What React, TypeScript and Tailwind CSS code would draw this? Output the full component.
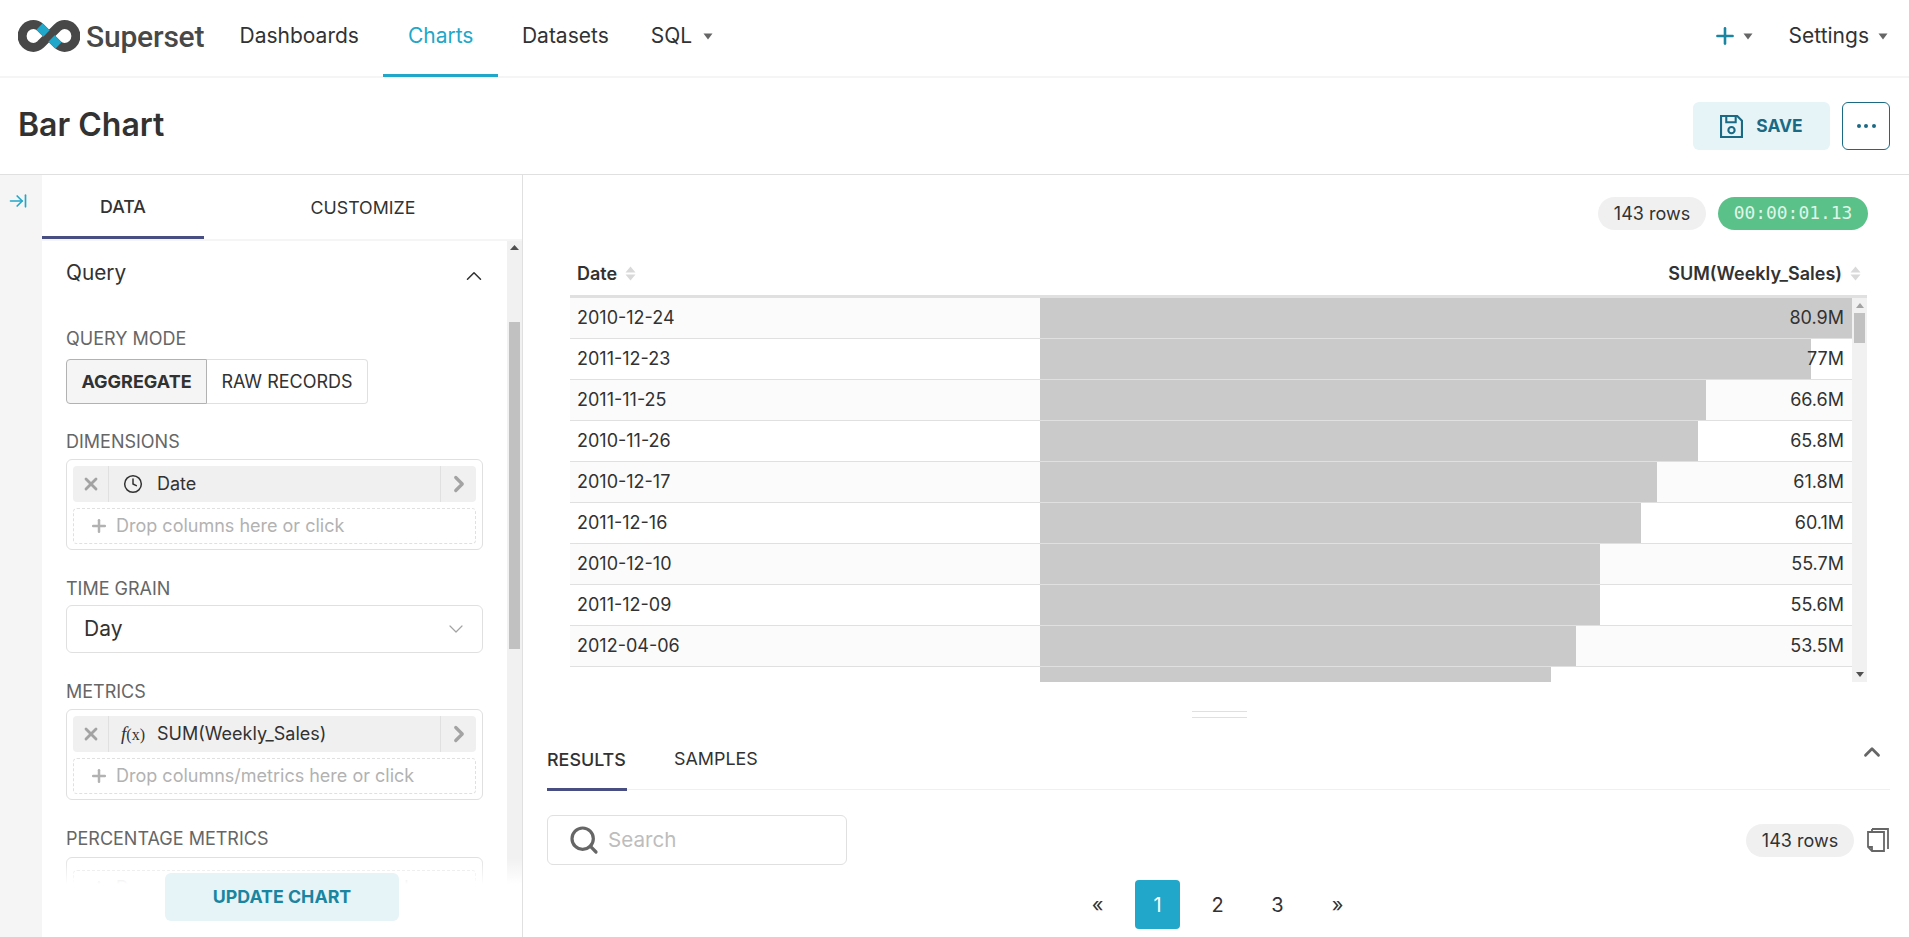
import React from 'react';
import { ArrowRightToLine, ChevronDown, ChevronRight, ChevronUp, Clock, Plus, Search, X } from 'lucide-react';

const rows = [
  { date: '2010-12-24', value: '80.9M', bar: 812 },
  { date: '2011-12-23', value: '77M', bar: 771 },
  { date: '2011-11-25', value: '66.6M', bar: 666 },
  { date: '2010-11-26', value: '65.8M', bar: 658 },
  { date: '2010-12-17', value: '61.8M', bar: 617 },
  { date: '2011-12-16', value: '60.1M', bar: 601 },
  { date: '2010-12-10', value: '55.7M', bar: 560 },
  { date: '2011-12-09', value: '55.6M', bar: 560 },
  { date: '2012-04-06', value: '53.5M', bar: 536 },
  { date: '', value: '', bar: 511 },
];

const Caret = () => (
  <svg width="10" height="7" viewBox="0 0 10 7" className="shrink-0">
    <path d="M0.5 0.5h9L5 6.5z" fill="#666666" />
  </svg>
);

const Logo = () => (
  <svg width="62" height="32" viewBox="0 0 62 32" className="shrink-0">
    <path
      d="M31 16L39.5 24.5C41.5 26.3 44 27.4 46.5 27.4A11.4 11.4 0 0 0 46.5 4.6C44 4.6 41.5 5.7 39.5 7.5L22.5 24.5C20.5 26.3 18 27.4 15.5 27.4A11.4 11.4 0 0 1 15.5 4.6C18 4.6 20.5 5.7 22.5 7.5L31 16"
      fill="none"
      stroke="#484848"
      strokeWidth="9"
    />
    <path d="M21.5 6.5L28.5 13.5M33.5 18.5L40.5 25.5" fill="none" stroke="#20a7c9" strokeWidth="9" />
  </svg>
);

const SortIcon = () => (
  <svg width="11" height="15" viewBox="0 0 11 15" className="shrink-0">
    <path d="M5.5 0.5L10.5 6.5H0.5zM5.5 14.5L0.5 8.5H10.5z" fill="#d9d9d9" />
  </svg>
);

const FieldLabel = ({ className, children }: { className: string; children: React.ReactNode }) => (
  <div className={`h-5 text-[18px] leading-[22px] text-[#666666] ${className}`}>{children}</div>
);

const DropZone = ({ text }: { text: string }) => (
  <div className="mt-[6px] h-9 flex items-center rounded border border-dashed border-[#e0e0e0] pl-[15px] text-[18px] text-[#b2b2b2] pb-[1px]">
    <Plus className="w-[20px] h-[20px] mr-[7px]" strokeWidth={3} color="#b2b2b2" />
    {text}
  </div>
);

const Pill = ({ icon, label }: { icon: React.ReactNode; label: string }) => (
  <div className="h-9 flex items-center rounded bg-[#f0f0f0] text-[18px] text-[#323232]">
    <div className="w-[36px] h-full flex items-center justify-center border-r border-[#e0e0e0]">
      <X className="w-[20px] h-[20px]" strokeWidth={3.4} color="#a3a3a3" />
    </div>
    <div className="w-[48px] flex justify-center">{icon}</div>
    <div className="flex-1 pb-[2px]">{label}</div>
    <div className="w-[36px] h-full flex items-center justify-center border-l border-[#e0e0e0]">
      <ChevronRight className="w-[26px] h-[26px]" strokeWidth={3} color="#a3a3a3" />
    </div>
  </div>
);

export default function App() {
  return (
    <div className="h-screen w-full overflow-hidden bg-white flex flex-col font-['Inter',sans-serif] text-[#323232]">
      {/* top nav */}
      <nav className="h-[78px] shrink-0 flex items-stretch border-b-2 border-[#f5f5f5] text-[21px]">
        <div className="flex items-center pl-[18px] gap-[6px] w-[215px] pb-[4px]">
          <Logo />
          <span className="font-['Roboto',sans-serif] font-medium text-[30px] text-[#484848] tracking-[-0.2px]">Superset</span>
        </div>
        <div className="px-[24.5px] flex items-center pb-[4px]">Dashboards</div>
        <div className="px-[24.5px] flex items-center pb-[3px] text-[#20a7c9] border-b-[3px] border-[#20a7c9] -mb-[1px]">Charts</div>
        <div className="px-[24px] flex items-center pb-[4px]">Datasets</div>
        <div className="ml-[18px] flex items-center gap-[11px] pb-[4px]">
          SQL <Caret />
        </div>
        <div className="ml-auto flex items-center pr-[21px] pb-[4px]">
          <Plus className="w-[26px] h-[26px] mr-[5px]" strokeWidth={2.4} color="#1985a0" />
          <Caret />
          <span className="ml-[36px] mr-[9px]">Settings</span>
          <Caret />
        </div>
      </nav>

      {/* title row */}
      <header className="h-[97px] shrink-0 flex items-center justify-between border-b border-[#e0e0e0] pl-[18px] pr-[19px]">
        <h1 className="text-[32px] font-semibold text-[#323232] -mt-[2px]">Bar Chart</h1>
        <div className="flex items-center gap-3">
          <button className="w-[137px] h-[48px] rounded-md bg-[#e6f4f8] flex items-center justify-center gap-[13px] text-[17.4px] font-bold text-[#1a6a85]">
            <svg width="23" height="23" viewBox="0 0 22 22" fill="none" stroke="#1a6a85" strokeWidth="2">
              <path d="M1 1H16.5L21 5.5V21H1zM6 1V7H15V1M11 17.5a3 3 0 1 0 0-6a3 3 0 0 0 0 6z" />
            </svg>
            SAVE
          </button>
          <button className="w-[48px] h-[48px] rounded-md border border-[#1a6a85] flex items-center justify-center gap-[3.5px]">
            <span className="w-1 h-1 rounded-full bg-[#1a6a85]" />
            <span className="w-1 h-1 rounded-full bg-[#1a6a85]" />
            <span className="w-1 h-1 rounded-full bg-[#1a6a85]" />
          </button>
        </div>
      </header>

      <div className="flex-1 min-h-0 flex">
        {/* collapsed rail */}
        <div className="w-[42px] shrink-0 bg-[#f5f5f5] pt-[16px] pl-[8px]">
          <ArrowRightToLine className="w-[20px] h-[20px]" strokeWidth={2} color="#20a7c9" />
        </div>

        {/* control panel */}
        <aside className="w-[481px] shrink-0 border-r border-[#e0e0e0] relative flex flex-col overflow-hidden">
          <div className="h-[64px] shrink-0 flex text-[17.8px]">
            <div className="w-[162px] flex items-center justify-center border-b-[3px] border-[#484e82] pt-[3px] font-medium">DATA</div>
            <div className="flex-1 flex items-center justify-center pt-[3px]">CUSTOMIZE</div>
          </div>
          <div className="flex-1 min-h-0 flex border-t-2 border-[#f5f5f5]">
            <div className="flex-1 px-6 pt-[20px] overflow-hidden">
              <div className="h-6 flex items-center justify-between text-[20.8px] leading-6">
                Query
                <ChevronUp className="w-[26px] h-[26px] -mr-[4px] mt-[5px]" strokeWidth={1.4} color="#323232" />
              </div>
              <FieldLabel className="mt-[43px]">QUERY MODE</FieldLabel>
              <div className="mt-[11px] flex w-[302px] h-[45px] text-[18px]">
                <div className="w-[141px] flex items-center justify-center rounded-l border border-[#b2b2b2] bg-[#f5f5f5] font-bold">AGGREGATE</div>
                <div className="flex-1 flex items-center justify-center rounded-r border border-l-0 border-[#e0e0e0]">RAW RECORDS</div>
              </div>
              <FieldLabel className="mt-[27px]">DIMENSIONS</FieldLabel>
              <div className="mt-2 h-[91px] rounded-md border border-[#e0e0e0] p-[6px]">
                <Pill icon={<Clock className="w-[20px] h-[20px]" strokeWidth={1.8} color="#323232" />} label="Date" />
                <DropZone text="Drop columns here or click" />
              </div>
              <FieldLabel className="mt-[28px]">TIME GRAIN</FieldLabel>
              <div className="mt-[7px] h-[48px] rounded-md border border-[#e0e0e0] flex items-center justify-between pl-[17px] pr-[14px] text-[21px]">
                Day
                <ChevronDown className="w-[24px] h-[24px]" strokeWidth={1.2} color="#a3a3a3" />
              </div>
              <FieldLabel className="mt-[28px]">METRICS</FieldLabel>
              <div className="mt-2 h-[91px] rounded-md border border-[#e0e0e0] p-[6px]">
                <Pill
                  icon={
                    <span className="font-['Liberation_Serif',serif] text-[16px] text-[#323232] whitespace-nowrap">
                      <i className="text-[19px]">f</i>(x)
                    </span>
                  }
                  label="SUM(Weekly_Sales)"
                />
                <DropZone text="Drop columns/metrics here or click" />
              </div>
              <FieldLabel className="mt-[28px]">PERCENTAGE METRICS</FieldLabel>
              <div className="mt-[9px] h-[91px] rounded-md border border-[#e0e0e0] p-[6px]">
                <DropZone text="Drop columns/metrics here or click" />
              </div>
            </div>
            {/* scrollbar */}
            <div className="w-[15px] shrink-0 bg-[#f1f1f1] flex flex-col items-center pt-[4px]">
              <svg width="9" height="5" viewBox="0 0 9 5">
                <path d="M4.5 0L9 5H0z" fill="#505050" />
              </svg>
              <div className="mt-[72px] w-[11px] h-[327px] bg-[#c1c1c1]" />
            </div>
          </div>
          {/* fade behind the update button */}
          <div className="absolute inset-x-0 bottom-0 h-[79px] bg-linear-to-b from-transparent to-white to-[33%] pointer-events-none" />
          <button className="absolute left-[123px] bottom-[16px] w-[234px] h-[48px] rounded-md bg-[#e6f4f8] text-[17.8px] font-bold text-[#1985a0]">
            UPDATE CHART
          </button>
        </aside>

        {/* chart + results */}
        <main className="flex-1 min-w-0 flex flex-col">
          <div className="mt-[22px] h-[33px] flex justify-end gap-3 pr-[41px]">
            <span className="w-[108px] rounded-full bg-[#f0f0f0] flex items-center justify-center text-[18px] text-[#323232]">143 rows</span>
            <span className="w-[150px] rounded-full bg-[#5ac189] flex items-center justify-center font-['DejaVu_Sans_Mono',monospace] text-[17.9px] text-[#dff5e8]">00:00:01.13</span>
          </div>

          <div className="ml-[47px] mr-[42px] mt-[24px]">
            <div className="h-[44px] flex items-center justify-between border-b-[3px] border-[#e0e0e0] pl-[7px] pr-[6px] pb-[2px] text-[18px] font-semibold">
              <span className="flex items-center gap-[8px]">Date <SortIcon /></span>
              <span className="flex items-center gap-[8px]">SUM(Weekly_Sales) <SortIcon /></span>
            </div>
            <div className="h-[384px] flex overflow-hidden">
              <div className="flex-1 min-w-0">
                {rows.map((row, i) => (
                  <div key={i} className={`h-[41px] flex border-b border-[#e0e0e0] text-[18px] ${i % 2 === 0 ? 'bg-[#fbfbfb]' : 'bg-white'}`}>
                    <div className="w-[470px] pl-[7px] pb-[1px] flex items-center">{row.date}</div>
                    <div className="flex-1 relative flex items-center justify-end pr-[8px] pb-[1px]">
                      <div className="absolute left-0 inset-y-0 bg-[#cacaca]" style={{ width: row.bar }} />
                      <span className="relative">{row.value}</span>
                    </div>
                  </div>
                ))}
              </div>
              <div className="w-[15px] shrink-0 bg-[#f1f1f1] flex flex-col items-center pt-[5px]">
                <svg width="8" height="5" viewBox="0 0 8 5">
                  <path d="M4 0L8 5H0z" fill="#a3a3a3" />
                </svg>
                <div className="mt-[5px] w-[11px] h-[30px] bg-[#c1c1c1]" />
                <svg width="8" height="5" viewBox="0 0 8 5" className="mt-auto mb-[5px]">
                  <path d="M4 5L8 0H0z" fill="#505050" />
                </svg>
              </div>
            </div>
          </div>

          {/* drag handle */}
          <div className="mt-[29px] self-center ml-[7px] w-[55px] h-[7px] border-y border-[#e0e0e0]" />

          <div className="mx-6 mr-[19px] mt-[20px] h-[52px] flex items-start justify-between border-b border-[#f0f0f0] text-[17.9px] relative">
            <div className="flex gap-[47px]">
              <div className="h-[53px] flex items-center w-[80px] border-b-[3px] border-[#484e82] pb-[6px] font-medium">RESULTS</div>
              <div className="h-[52px] flex items-center pb-[9px]">SAMPLES</div>
            </div>
            <ChevronUp className="w-[26px] h-[26px] mt-[1px] mr-[5px]" strokeWidth={2.6} color="#666666" />
          </div>

          <div className="mx-6 mr-[19px] mt-[25px] flex items-center justify-between">
            <div className="w-[300px] h-[50px] rounded-md border border-[#e0e0e0] flex items-center pl-[20px] text-[20.6px] text-[#bdbdbd]">
              <Search className="w-[32px] h-[32px] mr-[8px]" strokeWidth={2.4} color="#666666" />
              Search
            </div>
            <div className="flex items-center">
              <span className="w-[108px] h-[33px] rounded-full bg-[#f0f0f0] flex items-center justify-center text-[18px] ml-[1px]">143 rows</span>
              <svg width="22" height="25" viewBox="0 0 22 25" fill="none" stroke="#666666" strokeWidth="1.8" className="ml-[13px] mr-[1px]">
                <path d="M5 1H21V21M5 1V4M1 4H17V23H5L1 19zM1 19H5V23" />
              </svg>
            </div>
          </div>

          <div className="mt-[15px] ml-[3px] flex justify-center gap-[15px] text-[20px]">
            <span className="w-[45px] h-[49px] flex items-center justify-center">«</span>
            <span className="w-[45px] h-[49px] rounded bg-[#20a7c9] text-white flex items-center justify-center">1</span>
            <span className="w-[45px] h-[49px] flex items-center justify-center">2</span>
            <span className="w-[45px] h-[49px] flex items-center justify-center">3</span>
            <span className="w-[45px] h-[49px] flex items-center justify-center">»</span>
          </div>
        </main>
      </div>
    </div>
  );
}
